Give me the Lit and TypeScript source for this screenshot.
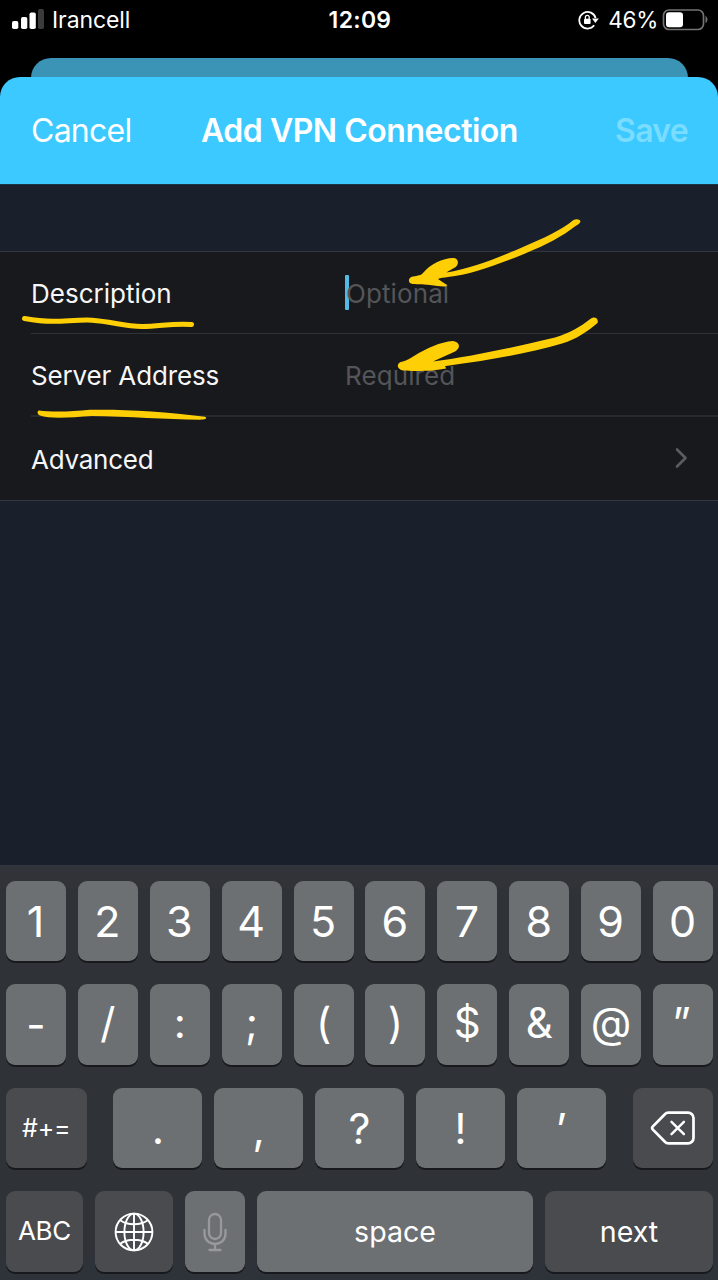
import { LitElement, html, css, svg } from "lit";
import { customElement } from "lit/decorators.js";

const globe = svg`<svg class="globe" width="40" height="40" viewBox="0 0 40 40" fill="none" stroke="#fff" stroke-width="1.9">
  <circle cx="20" cy="20" r="18.4"/><ellipse cx="20" cy="20" rx="9.6" ry="18.4"/>
  <path d="M20 1.6v36.8M1.6 20h36.8M6.2 8.2C10 11 14.8 12.2 20 12.2S30 11 33.8 8.2M6.2 31.8C10 29 14.8 27.8 20 27.8S30 29 33.8 31.8"/></svg>`;

const mic = svg`<svg width="24" height="40" viewBox="0 0 24 40" fill="none" stroke="#97999c" stroke-width="2.3" stroke-linecap="round">
  <rect x="6" y="2" width="12" height="25" rx="6"/><path d="M1.5 18v3.5C1.5 28 6 32 12 32s10.500-4 10.500-10.500V18M12 32v6M6.500 38h11"/></svg>`;

const backspace = svg`<svg width="46" height="36" viewBox="0 0 46 36" fill="none" stroke="#fff" stroke-width="2.7" stroke-linejoin="round" stroke-linecap="round">
  <path d="M18.500 2.600H38a5.500 5.500 0 0 1 5.500 5.500V27.900a5.500 5.500 0 0 1-5.500 5.500H18.500a5 5 0 0 1-3.600-1.600L2.900 19.600a2.300 2.300 0 0 1 0-3.200L14.900 4.200a5 5 0 0 1 3.600-1.600Z"/>
  <path d="M21.500 11.800l12.400 12.400M33.900 11.800L21.500 24.200" stroke-width="2.400"/></svg>`;

@customElement("app-root")
export class AppRoot extends LitElement {
  static styles = css`
    :host { display: flex; flex-direction: column; position: relative; width: 718px; height: 1280px; overflow: hidden; background: #000; color: #fff; font-family: Inter, "Liberation Sans", sans-serif; }
    * { box-sizing: border-box; }
    svg { display: block; flex: none; }
    .status { height: 58px; padding: 0 10px 18px 12px; display: grid; grid-template-columns: 1fr auto 1fr; align-items: center; font-size: 23px; }
    .left, .right { display: flex; align-items: center; }
    .right { justify-content: flex-end; }
    .bars { margin-bottom: 2px; }
    .carrier { margin-left: 8px; letter-spacing: -0.1px; }
    .time { font-weight: 600; letter-spacing: 0.3px; }
    .pct { margin: 0 4px 1px 9px; font-size: 22.500px; letter-spacing: -0.3px; }
    .peek { height: 40px; margin: 0 30px -21px 31px; border-radius: 20px 20px 0 0; background: #3b93b5; flex: none; }
    .head { height: 107px; flex: none; position: relative; padding: 0 30px 0 31px; border-radius: 20px 20px 0 0; background: #3bc9ff; display: grid; grid-template-columns: 1fr auto 1fr; align-items: center; font-size: 32px; }
    .cancel { letter-spacing: -0.750px; }
    .title { font-weight: 600; letter-spacing: -0.480px; }
    .save { font-weight: 600; text-align: right; color: #7adcff; letter-spacing: -0.700px; }
    .body { flex: 1; background: #19202b; padding-top: 66px; border-top: 1px solid #1c3542; }
    .list { background: #18191d; border-top: 1px solid #32373d; border-bottom: 1px solid #32373d; font-size: 26px; color: #f6f6f7; }
    .row { height: 82px; margin-left: 31px; padding-right: 30px; border-bottom: 1px solid #313237; display: grid; grid-template-columns: 314px 1fr auto; align-items: center; }
    .row.server { height: 83px; padding-top: 2px; border-bottom: 2px solid #28292e; }
    .row.last { height: 83px; border-bottom: 0; }
    .l1, .p1 { padding-top: 1px; }
    .l2 { letter-spacing: -0.150px; }
    .l3 { letter-spacing: -0.250px; padding-top: 2px; }
    .chev { margin-bottom: 1px; }
    .ph { color: #545559; display: flex; align-items: center; letter-spacing: 0.100px; }
    .caret { width: 4px; height: 35px; border-radius: 1px; background: #53b9e5; margin-right: -3px; }
    .kb { height: 415px; flex: none; padding: 15.600px 5px 8px 6px; background: linear-gradient(#32343b, #2f3236 30px, #2f3236 85%, #2e333a); display: flex; flex-direction: column; gap: 23px; }
    .keys { display: flex; gap: 11.900px; height: 80.600px; flex: none; }
    .key { flex: 1 1 0; min-width: 0; border-radius: 9px; background: #6d7073; box-shadow: 0 2px 0 #17191c; display: flex; align-items: center; justify-content: center; font-size: 43px; }
    .digits .key { padding-right: 1px; }
    .sym2 .key { font-size: 42px; padding-bottom: 3px; }
    .sym2 .key.minus { padding-bottom: 0; }
    .dark { background: #494b4f; }
    .key.small { font-size: 28.600px; padding-bottom: 1px; }
    .key.abc { font-size: 26px; letter-spacing: -0.300px; padding-bottom: 2px; }
    .key.alt { font-size: 25px; letter-spacing: -0.200px; padding-bottom: 0; }
    .quote span { letter-spacing: 1px; margin-right: 2px; }
    .w80 { flex: 0 0 80.500px; } .w77 { flex: 0 0 76.800px; } .w79 { flex: 0 0 78.500px; } .w60 { flex: 0 0 60px; } .w168 { flex: 0 0 168px; }
    .mid { flex: 1; display: flex; gap: 11.900px; padding: 0 15px; }
    .ink { position: absolute; left: 0; top: 184px; pointer-events: none; }
  `;

  private key(c: string, extra = "") {
    return html`<div class="key ${extra}"><span>${c}</span></div>`;
  }

  render() {
    return html`
      <div class="status">
        <div class="left">
          <svg class="bars" width="32" height="20" viewBox="0 0 32 20"><g fill="#fff"><rect x="0" y="12" width="6.300" height="8" rx="1.800"/><rect x="9" y="8" width="6.300" height="12" rx="1.800"/><rect x="17.500" y="3.500" width="6.300" height="16.500" rx="1.800"/></g><rect x="26" y="0" width="6" height="20" rx="1.800" fill="#3b3b3b"/></svg>
          <span class="carrier">Irancell</span>
        </div>
        <div class="time">12:09</div>
        <div class="right">
          <svg width="21" height="20" viewBox="0 0 21 20" fill="none" stroke="#fff" stroke-width="1.800"><path d="M16.200 15.300A8.300 8.300 0 1 1 17.600 8"/><path d="M14 8.400h6.800l-3.400 4.600z" fill="#fff" stroke="none"/><rect x="6" y="8.700" width="6.600" height="5.300" rx="1" fill="#fff" stroke="none"/><path d="M7.400 9V7.300a1.900 1.900 0 0 1 3.800 0V9" stroke-width="1.300"/></svg>
          <span class="pct">46%</span>
          <svg width="46" height="22" viewBox="0 0 46 22"><rect x="1.500" y="1" width="40" height="19.500" rx="5.500" fill="none" stroke="#737373" stroke-width="1.700"/><rect x="4" y="3.300" width="17" height="15" rx="3" fill="#fff"/><path d="M43.500 7c2.600 1 2.600 6 0 7z" fill="#737373"/></svg>
        </div>
      </div>
      <div class="peek"></div>
      <div class="head"><span class="cancel">Cancel</span><span class="title">Add VPN Connection</span><span class="save">Save</span></div>
      <div class="body">
        <div class="list">
          <div class="row"><span class="l1">Description</span><span class="ph"><i class="caret"></i><span class="p1">Optional</span></span></div>
          <div class="row server"><span class="l2">Server Address</span><span class="ph"><span class="p2">Required</span></span></div>
          <div class="row last"><span class="l3">Advanced</span><span></span>
            <svg class="chev" width="14" height="22" viewBox="0 0 14 22" fill="none" stroke="#5b5c60" stroke-width="2.600" stroke-linecap="round" stroke-linejoin="round"><path d="M3 2.500l8.500 8.500L3 19.500"/></svg></div>
        </div>
      </div>
      <div class="kb">
        <div class="keys digits">${[..."1234567890"].map((c) => this.key(c))}</div>
        <div class="keys sym2">${[..."-/:;()$&@”"].map((c) => this.key(c, c === "”" ? "quote" : c === "-" ? "minus" : ""))}</div>
        <div class="keys">${this.key("#+=", "dark small alt w80")}<div class="mid">${[...".,?!’"].map((c) => this.key(c))}</div><div class="key dark w80">${backspace}</div></div>
        <div class="keys">${this.key("ABC", "dark small abc w77")}<div class="key dark w79">${globe}</div><div class="key w60">${mic}</div>${this.key("space", "small")}${this.key("next", "dark small w168")}</div>
      </div>
      <svg class="ink" width="718" height="240" viewBox="0 184 718 240" fill="#ffcf06">
        <g fill="none" stroke="#ffcf06" stroke-linecap="round">
          <path d="M24.500 318.500C36 320.500 44 321.500 54 321.300C68 321 80 319.700 92 320.200C112 321.500 124 326.500 142 326.500C160 326.500 172 323 191.500 324.500" stroke-width="5"/>
        </g>
        <path d="M39 410.500C50 412 70 412 90 409.800C120 409 165 411.500 205 416.800C208 418.500 205 419.700 200 419.700C165 419.500 130 416.500 92 416C70 417.500 50 419 40 415.500C37 414 37 411 39 410.500Z"/>
        <path d="M573.500 220C576 218.500 580 219 580.500 221.500C580 224 577 225 575.500 226C562 236.500 548 244 524 254C498 264.500 470 275 448 277C444 277.500 440 278 438 279C442 282 446 284 447 285.500C446 287.500 438 286 430 285C422 284 415 285 411 283.500C407.500 281.500 408.500 277.500 413 276.500C418 275.500 421 275.500 423 273C430 264 444 257.500 454 258C459 259 459.500 265 454 268C451 270 448 271 446.500 272.500C470 269 500 257 523 247C545 237.500 560 231 573.500 220Z"/>
        <path d="M591 318.500C595 316 599 319 597.500 323C588 331 577 339 562 343.500C530 353 490 360 446 366C443 366.500 447 367 446 368.500C435 371 415 371.500 403 370.500C396 369 396 362.500 403 361.500C407 360.500 410 358.500 414 356C427 348 440 342 453 341C460 342 461 348 455 351.500C448 355 440 358 433 361.500C470 357 520 346 555 337.500C570 333 580 327 591 318.500Z"/>
      </svg>`;
  }
}
